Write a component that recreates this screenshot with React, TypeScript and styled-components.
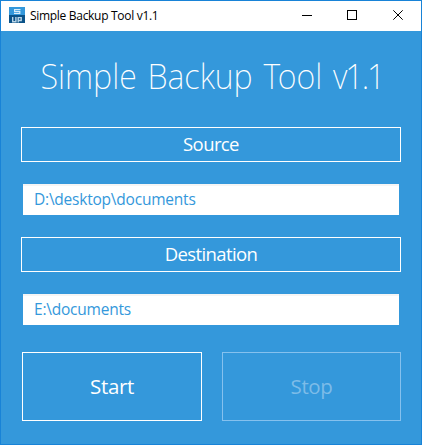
import React from 'react';
import styled, { createGlobalStyle } from 'styled-components';

const GlobalStyle = createGlobalStyle`
  * { box-sizing: border-box; }
  body { margin: 0; overflow: hidden; }
  button, input { font-family: inherit; border-radius: 0; margin: 0; }
`;

const Window = styled.div`
  width: 422px;
  height: 445px;
  display: flex;
  flex-direction: column;
  border: 1px solid #1883d7;
  background: #3498db;
  font-family: 'Open Sans', 'Noto Sans', sans-serif;
`;

const TitleBar = styled.header`
  height: 30px;
  flex: none;
  display: flex;
  align-items: center;
  padding: 0 0 2px 8px;
  background: #fff;
  color: #000;
`;

const Caption = styled.span`
  flex: 1;
  margin-left: 5px;
  padding-top: 1px;
  font-size: 12px;
  line-height: 16px;
  letter-spacing: -0.3px;
  white-space: nowrap;
`;

const Controls = styled.div`
  display: flex;
`;

const ControlButton = styled.button`
  width: 46px;
  height: 28px;
  padding: 0;
  border: 0;
  background: transparent;
  display: grid;
  place-items: center;

  svg { overflow: visible; }
`;

const Body = styled.main`
  flex: 1;
  display: flex;
  flex-direction: column;
  padding: 23px 20px 0;
`;

const Heading = styled.h1`
  margin: 0 0 0 1px;
  height: 73px;
  align-self: center;
  font-family: 'Noto Sans', sans-serif;
  font-size: 35px;
  font-weight: 200;
  line-height: 44px;
  word-spacing: 2.6px;
  white-space: nowrap;
  color: #fff;
  transform: scaleX(0.922);
`;

const Version = styled.span`
  letter-spacing: -2.3px;
`;

const SectionButton = styled.button`
  height: 35px;
  flex: none;
  padding: 0 0 2px;
  border: 1px solid #fff;
  background: transparent;
  color: #fff;
  font-size: 18.5px;
  font-weight: 400;
  line-height: 31px;
  letter-spacing: -0.6px;
`;

const PathInput = styled.input`
  height: 31px;
  flex: none;
  margin: 22px 2px;
  padding: 0 0 4px 11px;
  border: 0;
  border-top: 2px solid #f5f5f5;
  outline: 0;
  background: #fff;
  color: #3498db;
  font-size: 15.5px;
  font-weight: 400;
  letter-spacing: -0.22px;
`;

const Actions = styled.div`
  display: flex;
  gap: 20px;
  margin: 5px 0 0 1px;
`;

const ActionButton = styled.button<{ $width: number }>`
  width: ${(p) => p.$width}px;
  height: 69px;
  padding: 0;
  border: 1px solid #fff;
  background: transparent;
  color: #fff;
  font-size: 20.5px;
  font-weight: 400;
  line-height: 67px;
  letter-spacing: -0.35px;

  &:disabled {
    border-color: #85c1ee;
    color: #7dbce8;
  }
`;

const AppIcon = () => (
  <svg width="16" height="16" viewBox="0 0 16 16" aria-hidden="true">
    <rect width="16" height="8" fill="#3498db" />
    <rect y="8" width="16" height="8" fill="#0b5288" />
    <path d="M11.5 2.7H5.6v1.9h5.2v1.9H5" fill="none" stroke="#d9edfa" strokeWidth="1.2" />
    <path d="M3.7 10v4.7h3.2V10M9.2 15.6v-5h3v2.9h-3" fill="none" stroke="#b9d5e8" strokeWidth="1.4" />
  </svg>
);

const controls = [
  { label: 'Minimize', d: 'M1 5.5h10', crisp: true },
  { label: 'Maximize', d: 'M.5.5h9v9h-9z', crisp: true },
  { label: 'Close', d: 'M.3.3l9.4 9.4M9.7.3L.3 9.7', crisp: false },
];

const folders = [
  { label: 'Source', path: 'D:\\desktop\\documents' },
  { label: 'Destination', path: 'E:\\documents' },
];

const Folder = styled.section`
  display: flex;
  flex-direction: column;
`;

export default function App() {
  return (
    <>
      <GlobalStyle />
      <Window>
        <TitleBar>
          <AppIcon />
          <Caption>Simple Backup Tool v1.1</Caption>
          <Controls>
            {controls.map(({ label, d, crisp }) => (
              <ControlButton key={label} aria-label={label}>
                <svg width="10" height="10" viewBox="0 0 10 10">
                  <path
                    d={d}
                    fill="none"
                    stroke="#000"
                    strokeWidth="1"
                    shapeRendering={crisp ? 'crispEdges' : 'auto'}
                  />
                </svg>
              </ControlButton>
            ))}
          </Controls>
        </TitleBar>
        <Body>
          <Heading>
            Simple Backup Tool <Version>v1.1</Version>
          </Heading>
          {folders.map(({ label, path }) => (
            <Folder key={label}>
              <SectionButton>{label}</SectionButton>
              <PathInput defaultValue={path} spellCheck={false} aria-label={`${label} path`} />
            </Folder>
          ))}
          <Actions>
            <ActionButton $width={180}>Start</ActionButton>
            <ActionButton $width={179} disabled>
              Stop
            </ActionButton>
          </Actions>
        </Body>
      </Window>
    </>
  );
}
